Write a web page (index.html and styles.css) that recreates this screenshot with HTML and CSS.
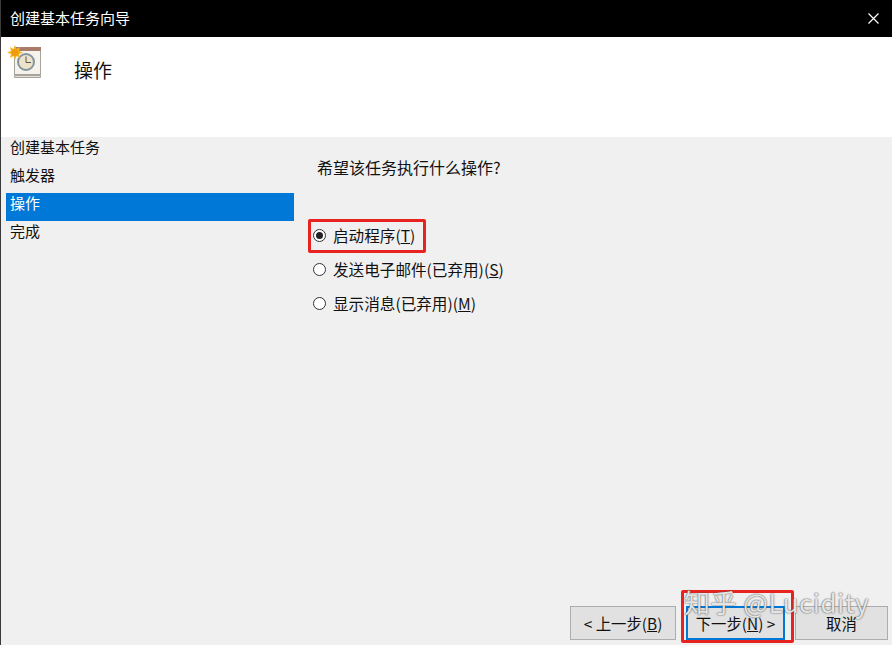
FILE: index.html
```html
<!DOCTYPE html>
<html lang="zh-CN">
<head>
<meta charset="utf-8">
<title>创建基本任务向导</title>
<link rel="stylesheet" href="styles.css">
</head>
<body>
<div class="window">
  <div class="titlebar">
    <span class="title">创建基本任务向导</span>
    <svg class="close" width="11" height="11" viewBox="0 0 11 11"><path d="M0.5 0.5L10.5 10.5M10.5 0.5L0.5 10.5" stroke="#fff" stroke-width="1.2" fill="none"/></svg>
  </div>
  <div class="header">
    <svg class="task-icon" width="34" height="33" viewBox="0 0 34 33">
      <rect x="7.500" y="5.500" width="26" height="24" fill="#f6f3ec" stroke="#a9a49b"/>
      <path d="M7.500 30.500H33.500V32.500H7.500Z" fill="#e4e1da" stroke="#a9a49b"/>
      <rect x="7" y="2" width="27" height="4" fill="#a87c68"/>
      <circle cx="19" cy="17" r="8" fill="#ece3c8" stroke="#8494a0" stroke-width="2"/>
      <path d="M19 11.500V17.500H24" stroke="#555" fill="none"/>
      <path d="M8 0L9.500 4L13 2L12 6L16 7.500L12 9L13 13L9.500 11L8 15L6.500 11L3 13L4 9L0 7.500L4 6L3 2L6.500 4Z" fill="#f7b21a"/>
      <circle cx="8" cy="7.500" r="3.500" fill="#f09a10"/>
    </svg>
    <span class="heading">操作</span>
  </div>
  <div class="body">
    <nav class="steps">
      <div class="step">创建基本任务</div>
      <div class="step">触发器</div>
      <div class="step active">操作</div>
      <div class="step">完成</div>
    </nav>
    <main class="content">
      <p class="question">希望该任务执行什么操作?</p>
      <div class="options">
        <label class="option"><span class="radio checked"></span><span>启动程序(<u>T</u>)</span></label>
        <label class="option"><span class="radio"></span><span>发送电子邮件(已弃用)(<u>S</u>)</span></label>
        <label class="option"><span class="radio"></span><span>显示消息(已弃用)(<u>M</u>)</span></label>
      </div>
    </main>
    <div class="buttons">
      <button class="btn back">&lt; 上一步(<u>B</u>)</button>
      <button class="btn next">下一步(<u>N</u>) &gt;</button>
      <button class="btn cancel">取消</button>
    </div>
  </div>
  <div class="mark mark-radio"></div>
  <div class="mark mark-next"></div>
  <div class="watermark">知乎 @Lucidity</div>
</div>
</body>
</html>
```
FILE: styles.css
```css
* { box-sizing: border-box; }
html, body { margin: 0; padding: 0; }
body {
  width: 892px;
  height: 645px;
  overflow: hidden;
  font-family: "Noto Sans CJK SC", "Liberation Sans", sans-serif;
  font-size: 15px;
  color: #111;
}
.window {
  position: relative;
  width: 892px;
  height: 645px;
  display: flex;
  flex-direction: column;
  border-left: 1px solid #3a3a3a;
  background: #f0f0f0;
}
.titlebar {
  height: 37px;
  flex: none;
  background: #000;
  color: #fff;
  display: flex;
  align-items: center;
  justify-content: space-between;
  padding: 0 13px 2px 9px;
}
.title { font-size: 15px; line-height: 20px; }
.close { display: block; margin-top: 2px; }
.header {
  height: 100px;
  flex: none;
  background: #fff;
  position: relative;
  padding: 8px 0 0 6px;
  display: flex;
  align-items: flex-start;
}
.task-icon { display: block; flex: none; }
.heading {
  font-size: 19px;
  line-height: 26px;
  margin: 12px 0 0 33px;
}
.body { flex: 1; position: relative; display: flex; }
.steps { width: 293px; flex: none; padding-left: 5px; }
.step {
  height: 28px;
  padding-left: 4px;
  line-height: 20px;
  font-size: 15px;
}
.step.active { background: #0078d7; color: #fff; }
.content { padding: 19px 0 0 23px; }
.question { margin: 0; font-size: 16px; line-height: 22px; }
.options {
  margin: 47px 0 0 -4px;
  display: flex;
  flex-direction: column;
  gap: 14px;
}
.option {
  display: flex;
  align-items: center;
  gap: 7px;
  height: 20px;
  font-size: 15.6px;
  line-height: 20px;
}
.radio {
  width: 13px;
  height: 13px;
  border: 1px solid #333;
  border-radius: 50%;
  background: #fff;
  flex: none;
  display: flex;
  align-items: center;
  justify-content: center;
}
.radio.checked::after {
  content: "";
  width: 7px;
  height: 7px;
  border-radius: 50%;
  background: #222;
}
.buttons {
  position: absolute;
  right: 4px;
  bottom: 5px;
  display: flex;
  gap: 10px;
}
.btn {
  height: 34px;
  margin: 0;
  padding: 0;
  font: inherit;
  font-size: 15.4px;
  color: #111;
  background: #e1e1e1;
  border: 1px solid #adadad;
}
.back { width: 106px; }
.next { width: 99px; border: 2px solid #0078d7; }
.cancel { width: 93px; }
.mark {
  position: absolute;
  border: 3px solid #e8231f;
  border-radius: 2px;
  pointer-events: none;
}
.mark-radio { left: 307px; top: 219px; width: 118px; height: 34px; }
.mark-next { left: 680px; top: 590px; width: 113px; height: 53px; }
.watermark {
  position: absolute;
  left: 683px;
  top: 584px;
  font-size: 26px;
  line-height: 36px;
  letter-spacing: 0.5px;
  white-space: nowrap;
  color: rgba(255, 255, 255, 0.85);
  text-shadow: 0 0 1px #555, 0 0 2px rgba(70, 70, 70, 0.7);
  pointer-events: none;
}
```
